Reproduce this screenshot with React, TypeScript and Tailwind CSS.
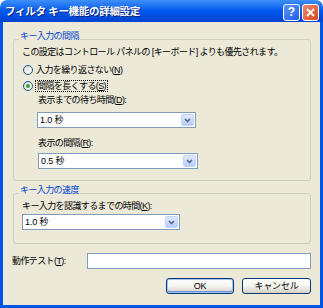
import type { ReactNode } from "react";

const ui = "font-['Liberation_Sans','Noto_Sans_CJK_JP',sans-serif]";

function Select({ value, className }: { value: string; className: string }) {
  return (
    <div className={`flex h-[16px] items-center border border-[#7f9db9] bg-white ${className}`}>
      <span className="flex-1 pl-[2px] leading-none tracking-[-0.1px]">{value}</span>
      <span className="mr-px flex h-[12px] w-[13px] items-center justify-center rounded-[2px] border border-[#c3d3fd] bg-gradient-to-b from-[#e0eafe] to-[#b7cdf7]">
        <svg width="7" height="5" viewBox="0 0 7 5">
          <path d="M1 1l2.5 2.5L6 1" stroke="#4d6185" strokeWidth="1.5" fill="none" />
        </svg>
      </span>
    </div>
  );
}

function Radio({ checked }: { checked?: boolean }) {
  return (
    <span className="flex h-[10px] w-[10px] items-center justify-center rounded-full border border-[#1c5180] bg-gradient-to-br from-[#dcdcd4] to-white">
      {checked && <span className="h-[4px] w-[4px] rounded-full bg-[#2fa52f]" />}
    </span>
  );
}

function Group({ title, className, children }: { title: string; className: string; children: ReactNode }) {
  return (
    <fieldset className={`rounded-[3px] border border-[#d0d0bf] pl-[8px] ${className}`}>
      <legend className="-ml-[3px] h-[16px] px-px pb-[6px] leading-[10px] text-[#0046d5]">{title}</legend>
      {children}
    </fieldset>
  );
}

function Button({ children, primary }: { children: ReactNode; primary?: boolean }) {
  return (
    <button
      className={`flex h-[16px] items-center justify-center rounded-[3px] border border-[#003c74] bg-gradient-to-b from-white via-[#f4f4f0] to-[#d6d0c5] leading-none tracking-[-0.2px] ${
        primary ? "w-[68px] shadow-[inset_0_0_0_1px_#a8c3f0,inset_0_-1px_0_1px_#6e8fdb]" : "w-[69px]"
      }`}
    >
      {children}
    </button>
  );
}

export default function App() {
  return (
    <div className={`flex h-[308px] w-[323px] flex-col overflow-hidden rounded-t-[7px] bg-white text-black ${ui}`}>
      <div className="flex h-[22px] items-center bg-gradient-to-b from-[#3d8ff7] via-[#0058ee] to-[#0043cf] pl-[5px] pr-[4px]">
        <span className="flex-1 pt-px text-[10.5px] font-bold tracking-[-0.3px] text-white [text-shadow:1px_1px_0_#0a1e7a]">
          フィルタ キー機能の詳細設定
        </span>
        <div className="flex gap-[2px] pt-[2px]">
          <span className="flex h-[17px] w-[17px] items-center justify-center rounded-[3px] border border-white bg-gradient-to-br from-[#5b95f8] to-[#1f5ce6] text-[12px] font-bold leading-none text-white">
            ?
          </span>
          <span className="flex h-[17px] w-[17px] items-center justify-center rounded-[3px] border border-white bg-gradient-to-br from-[#e98a6b] to-[#d8441c]">
            <svg width="9" height="9" viewBox="0 0 9 9">
              <path d="M1 1l7 7M8 1L1 8" stroke="white" strokeWidth="1.8" />
            </svg>
          </span>
        </div>
      </div>

      <div className="flex flex-1 flex-col border-x-[3px] border-b-[3px] border-[#0055e5] bg-[#ece9d8] pl-[10px] pr-[9px] pt-[9px] text-[9px] tracking-[-0.6px]">
        <Group title="キー入力の間隔" className="pb-[11px]">
          <div className="h-[10px] leading-[10px]">
            この設定はコントロール パネルの [キーボード] よりも優先されます。
          </div>
          <div className="mt-[5px] flex h-[16px] items-center gap-[3px] pl-px">
            <Radio />
            <span className="leading-[10px]">
              入力を繰り返さない(<u>N</u>)
            </span>
          </div>
          <div className="flex h-[16px] items-center gap-[2px] pl-px">
            <Radio checked />
            <span className="border border-dotted border-black px-px leading-[10px]">
              間隔を長くする(<u>S</u>)
            </span>
          </div>
          <div className="ml-[16px] mt-px h-[10px] leading-[10px]">
            表示までの待ち時間(<u>D</u>):
          </div>
          <Select value="1.0 秒" className="ml-[15px] mt-[7px] w-[159px]" />
          <div className="ml-[16px] mt-[10px] h-[10px] leading-[10px]">
            表示の間隔(<u>R</u>):
          </div>
          <Select value="0.5 秒" className="ml-[16px] mt-[5px] w-[160px]" />
        </Group>

        <Group title="キー入力の速度" className="mt-[4px] pb-[13px]">
          <div className="h-[10px] leading-[10px]">
            キー入力を認識するまでの時間(<u>K</u>):
          </div>
          <Select value="1.0 秒" className="mt-[3px] w-[158px]" />
        </Group>

        <div className="mt-[9px] flex items-center">
          <span className="-ml-px w-[75px] leading-[10px]">
            動作テスト(<u>T</u>):
          </span>
          <div className="h-[16px] flex-1 border border-[#7f9db9] bg-white" />
        </div>

        <div className="mt-[9px] flex justify-end gap-[8px]">
          <Button primary>OK</Button>
          <Button>キャンセル</Button>
        </div>
      </div>
    </div>
  );
}
